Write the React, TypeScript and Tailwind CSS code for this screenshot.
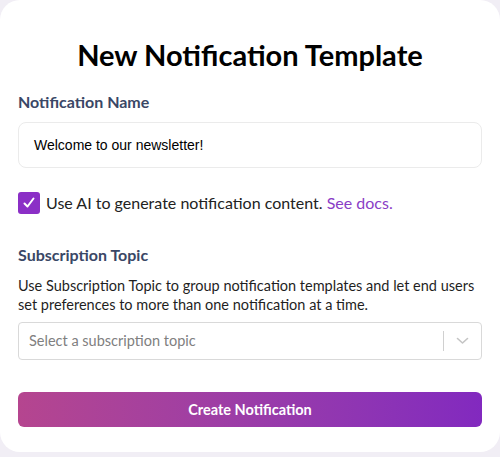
import React from "react";

export default function App() {
  return (
    <div className="w-[500px] h-[457px] bg-[#f1eef5] overflow-hidden" style={{ fontFamily: "Lato, 'Noto Sans', sans-serif" }}>
      <div className="w-[500px] h-[452px] bg-white rounded-[20px] px-[18px] pt-[38px] flex flex-col">
        <h1 className="text-center text-[29px] leading-[34px] font-bold text-black">New Notification Template</h1>
        <label className="mt-[20px] text-[16px] leading-[20px] font-bold text-[#3a4766]">Notification Name</label>
        <div className="mt-[10px] h-[46px] rounded-[8px] border border-[#ebebeb] flex items-center px-[15px]">
          <span className="text-[14px] text-black" style={{ fontFamily: "'Liberation Sans', Arial, sans-serif" }}>Welcome to our newsletter!</span>
        </div>
        <div className="mt-[24px] flex items-center gap-[6px]">
          <div className="w-[22px] h-[22px] rounded-[3px] bg-[#8b2fc6] flex items-center justify-center">
            <svg width="14" height="14" viewBox="0 0 14 14" fill="none">
              <path d="M2.5 7.5 L5.5 10.5 L11.5 2.5" stroke="white" strokeWidth="2" strokeLinecap="round" strokeLinejoin="round" />
            </svg>
          </div>
          <span className="text-[16px] leading-[22px] text-[#222]">
            Use AI to generate notification content. <span className="text-[#8a3dc6]">See docs.</span>
          </span>
        </div>
        <label className="mt-[31px] text-[16px] leading-[20px] font-bold text-[#3a4766]">Subscription Topic</label>
        <p className="mt-[11px] text-[14.5px] leading-[19px] text-[#1f1f1f]">
          Use Subscription Topic to group notification templates and let end users set preferences to more than one notification at a time.
        </p>
        <div className="mt-[8px] h-[38px] rounded-[4px] border border-[#d9d9d9] flex items-center">
          <span className="flex-1 pl-[10px] text-[14.5px] text-[#808080]">Select a subscription topic</span>
          <div className="w-px h-[20px] bg-[#d0d0d0]" />
          <div className="w-[37px] flex items-center justify-center">
            <svg width="13" height="8" viewBox="0 0 13 8" fill="none">
              <path d="M1.5 1.5 L6.5 6 L11.5 1.5" stroke="#c4c4c4" strokeWidth="1.6" strokeLinecap="round" strokeLinejoin="round" />
            </svg>
          </div>
        </div>
        <button className="mt-[32px] h-[35px] rounded-[6px] bg-gradient-to-r from-[#b5458f] to-[#8229bf] text-white text-[14.5px] font-bold">
          Create Notification
        </button>
      </div>
    </div>
  );
}
